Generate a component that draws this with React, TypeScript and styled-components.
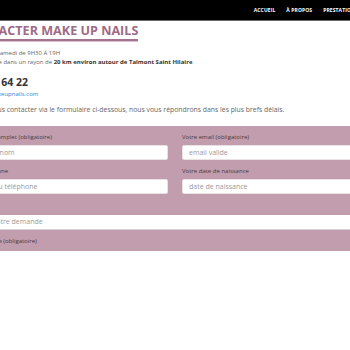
import React from "react";
import styled, { createGlobalStyle } from "styled-components";

const Global = createGlobalStyle`
  html, body { margin: 0; padding: 0; background: #fff; overflow: hidden; }
  body { font-family: "Open Sans", "Liberation Sans", sans-serif; width: 350px; height: 350px; }
  * { box-sizing: border-box; }
`;

const Header = styled.header`
  height: 21px;
  background: #000;
  border-bottom: 1px solid #6b6b6b;
  display: flex;
  justify-content: flex-end;
  align-items: center;
  gap: 11px;
  margin-right: -8px;
  padding-bottom: 1px;
`;

const NavItem = styled.span`
  color: #fff;
  font-size: 5px;
  font-weight: 700;
  letter-spacing: 0.1px;
  text-transform: uppercase;
  white-space: nowrap;
`;

const Main = styled.main`
  margin-left: -37px;
  width: 430px;
  display: flex;
  flex-direction: column;
`;

const Title = styled.h1`
  align-self: flex-start;
  margin: 3px 0 0;
  font-size: 12.6px;
  line-height: 14px;
  font-weight: 700;
  text-transform: uppercase;
  color: #9e6b86;
  border-bottom: 2px solid #a27490;
  box-shadow: 0 1px 0 #d9c3cf;
  padding-bottom: 1px;
  white-space: nowrap;
`;

const Info = styled.p<{ $top?: number; $size?: number }>`
  margin: ${(p) => p.$top ?? 0}px 0 0;
  font-size: ${(p) => p.$size ?? 6}px;
  line-height: 8.5px;
  color: #666;
  white-space: nowrap;
  b { color: #333; font-weight: 700; }
`;

const Phone = styled.div`
  margin: 9px 0 0 -6px;
  font-size: 10.5px;
  line-height: 14px;
  font-weight: 700;
  color: #333;
  white-space: nowrap;
`;

const Mail = styled.a`
  margin-top: 1px;
  font-size: 6px;
  line-height: 8px;
  color: #2a88d8;
  text-decoration: none;
  white-space: nowrap;
`;

const Form = styled.form`
  margin-top: 11px;
  background: #c19dad;
  padding: 7px 0 6px;
  display: grid;
  grid-template-columns: 205px 205px;
  column-gap: 14px;
`;

const Field = styled.div<{ $full?: boolean }>`
  grid-column: ${(p) => (p.$full ? "1 / -1" : "auto")};
  display: flex;
  flex-direction: column;
  margin-bottom: ${(p) => (p.$full ? 0 : 7)}px;
`;

const Label = styled.label`
  font-size: 6px;
  line-height: 8px;
  color: #4a3a42;
  white-space: nowrap;
  margin-bottom: 4px;
`;

const Input = styled.input`
  height: 15px;
  border: 1px solid #e8e2e5;
  border-radius: 2px;
  background: #fff;
  padding: 0 6px;
  font-family: inherit;
  font-size: 7px;
  color: #555;
  outline: none;
  &::placeholder { color: #9a9a9a; }
`;

const Wide = styled.input`
  height: 15px;
  margin: 2px -40px 0 -20px;
  border: none;
  border-bottom: 1px solid #d7d0d3;
  background: #fff;
  padding: 0 0 0 20px;
  font-family: inherit;
  font-size: 7px;
  outline: none;
  &::placeholder { color: #9a9a9a; }
`;

const MsgLabel = styled(Label)`
  margin: 0;
  padding: 7px 0 0 0;
`;

export default function App() {
  return (
    <>
      <Global />
      <Header>
        <NavItem>Accueil</NavItem>
        <NavItem>À propos</NavItem>
        <NavItem>Prestations</NavItem>
      </Header>
      <Main>
        <Title>Contacter Make Up Nails</Title>
        <Info $top={8}>Du lundi au samedi de 9H30 À 19H</Info>
        <Info>Je me déplace dans un rayon de <b>20 km environ autour de Talmont Saint Hilaire</b></Info>
        <Phone>06 12 34 64 22</Phone>
        <Mail href="#">contact@makeupnails.com</Mail>
        <Info $top={8} $size={6.85}>Veuillez nous contacter via le formulaire ci-dessous, nous vous répondrons dans les plus brefs délais.</Info>
        <Form>
          <Field>
            <Label>Votre nom complet (obligatoire)</Label>
            <Input placeholder="Prénom, nom" />
          </Field>
          <Field>
            <Label>Votre email (obligatoire)</Label>
            <Input placeholder="email valide" />
          </Field>
          <Field>
            <Label>Votre téléphone</Label>
            <Input placeholder="Mobile ou téléphone" />
          </Field>
          <Field>
            <Label>Votre date de naissance</Label>
            <Input placeholder="date de naissance" />
          </Field>
          <Field $full>
            <Label>Objet</Label>
            <Wide placeholder="Objet de votre demande" />
            <MsgLabel>Votre requête (obligatoire)</MsgLabel>
          </Field>
        </Form>
      </Main>
    </>
  );
}
